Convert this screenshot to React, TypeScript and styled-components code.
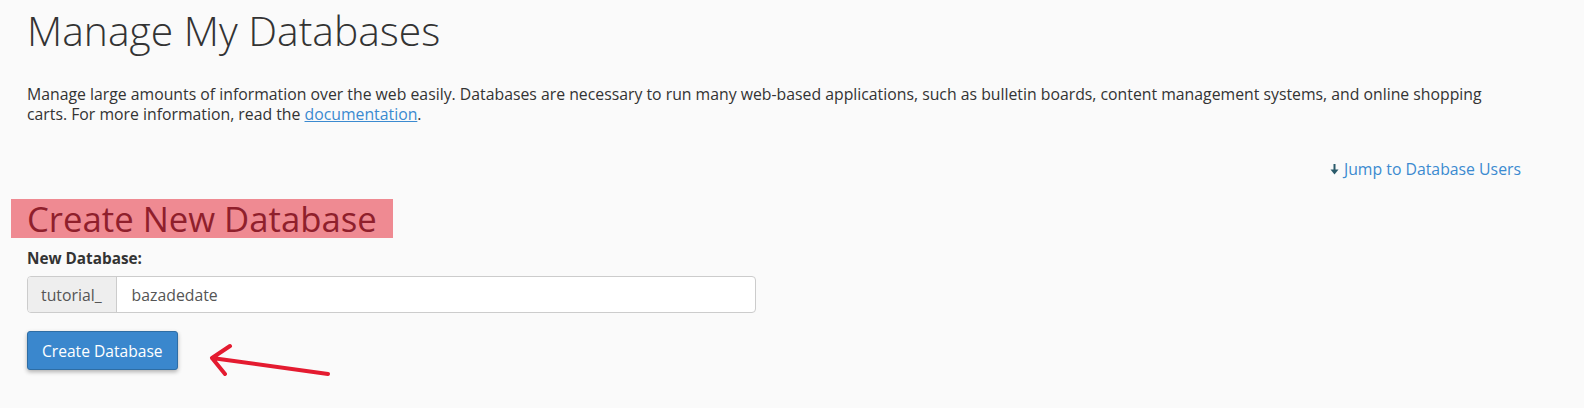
import React from "react";
import styled, { createGlobalStyle } from "styled-components";

const GlobalStyle = createGlobalStyle`
  html, body {
    margin: 0;
    padding: 0;
    background: #fafafa;
  }
  html {
    overflow: hidden;
  }
  body {
    font-family: "Open Sans", "Liberation Sans", sans-serif;
    font-size: 15px;
    color: #333333;
  }
`;

const Page = styled.div`
  box-sizing: border-box;
  min-height: 408px;
  padding: 0 63px 0 27px;
`;

const Title = styled.h1`
  margin: 0;
  padding-top: 6px;
  font-weight: 300;
  font-size: 40.8px;
  line-height: 48px;
  color: #333333;
`;

const Intro = styled.p`
  margin: 30px 0 0;
  max-width: 1460px;
  font-size: 15.8px;
  line-height: 20px;
`;

const Link = styled.a`
  color: #3b8ad0;
  text-decoration: underline;
`;

const JumpRow = styled.div`
  display: flex;
  justify-content: flex-end;
  margin-top: 34px;
`;

const JumpLink = styled.a`
  display: flex;
  align-items: center;
  gap: 4px;
  font-size: 15.8px;
  color: #3b8ad0;
  text-decoration: none;
`;

const SectionTitle = styled.h2`
  display: inline-block;
  margin: 19px 0 0 -16px;
  padding: 0 16px;
  height: 39px;
  line-height: 40px;
  font-weight: 400;
  font-size: 34.7px;
  color: #8f1f2c;
  background: #ef8a92;
`;

const FieldLabel = styled.label`
  display: block;
  margin-top: 10px;
  font-weight: 700;
  font-size: 15.3px;
  line-height: 20px;
`;

const InputGroup = styled.div`
  display: flex;
  width: 729px;
  height: 37px;
  margin-top: 8px;
  box-sizing: border-box;
  border: 1px solid #cccccc;
  border-radius: 4px;
  overflow: hidden;
  background: #ffffff;
`;

const Addon = styled.span`
  display: flex;
  align-items: center;
  padding: 0 14px 0 13px;
  background: #eeeeee;
  border-right: 1px solid #cccccc;
  font-size: 15.8px;
  color: #555555;
`;

const TextInput = styled.input`
  flex: 1;
  border: 0;
  outline: none;
  padding: 0 15px;
  font-family: inherit;
  font-size: 15.8px;
  color: #555555;
  background: transparent;
`;

const ButtonRow = styled.div`
  position: relative;
  margin-top: 18px;
`;

const PrimaryButton = styled.button`
  height: 39px;
  padding: 0 14px;
  border: 1px solid #2e6da4;
  border-radius: 3px;
  background: #3a87cd;
  color: #ffffff;
  font-family: inherit;
  font-size: 15.6px;
  box-shadow: 0 2px 4px rgba(0, 0, 0, 0.3);
`;

const Annotation = styled.svg`
  position: absolute;
  left: 170px;
  top: 0;
`;

const App: React.FC = () => {
  return (
    <>
      <GlobalStyle />
      <Page>
        <Title>Manage My Databases</Title>
        <Intro>
          Manage large amounts of information over the web easily. Databases
          are necessary to run many web-based applications, such as bulletin
          boards, content management systems, and online shopping carts. For
          more information, read the <Link href="#">documentation</Link>.
        </Intro>
        <JumpRow>
          <JumpLink href="#">
            <svg width="11" height="14" viewBox="0 0 11 14">
              <path d="M5.5 2v7" stroke="#2a5a6a" strokeWidth="2" fill="none" />
              <path d="M1.5 7.5h8L5.5 12.5z" fill="#2a5a6a" />
            </svg>
            Jump to Database Users
          </JumpLink>
        </JumpRow>
        <SectionTitle>Create New Database</SectionTitle>
        <FieldLabel>New Database:</FieldLabel>
        <InputGroup>
          <Addon>tutorial_</Addon>
          <TextInput defaultValue="bazadedate" />
        </InputGroup>
        <ButtonRow>
          <PrimaryButton>Create Database</PrimaryButton>
          <Annotation width="150" height="55" viewBox="0 0 150 55">
            <path
              d="M131 43L15 27M33 15L15 27L28 43"
              stroke="#e41b30"
              strokeWidth="4"
              strokeLinecap="round"
              strokeLinejoin="round"
              fill="none"
            />
          </Annotation>
        </ButtonRow>
      </Page>
    </>
  );
};

export default App;
